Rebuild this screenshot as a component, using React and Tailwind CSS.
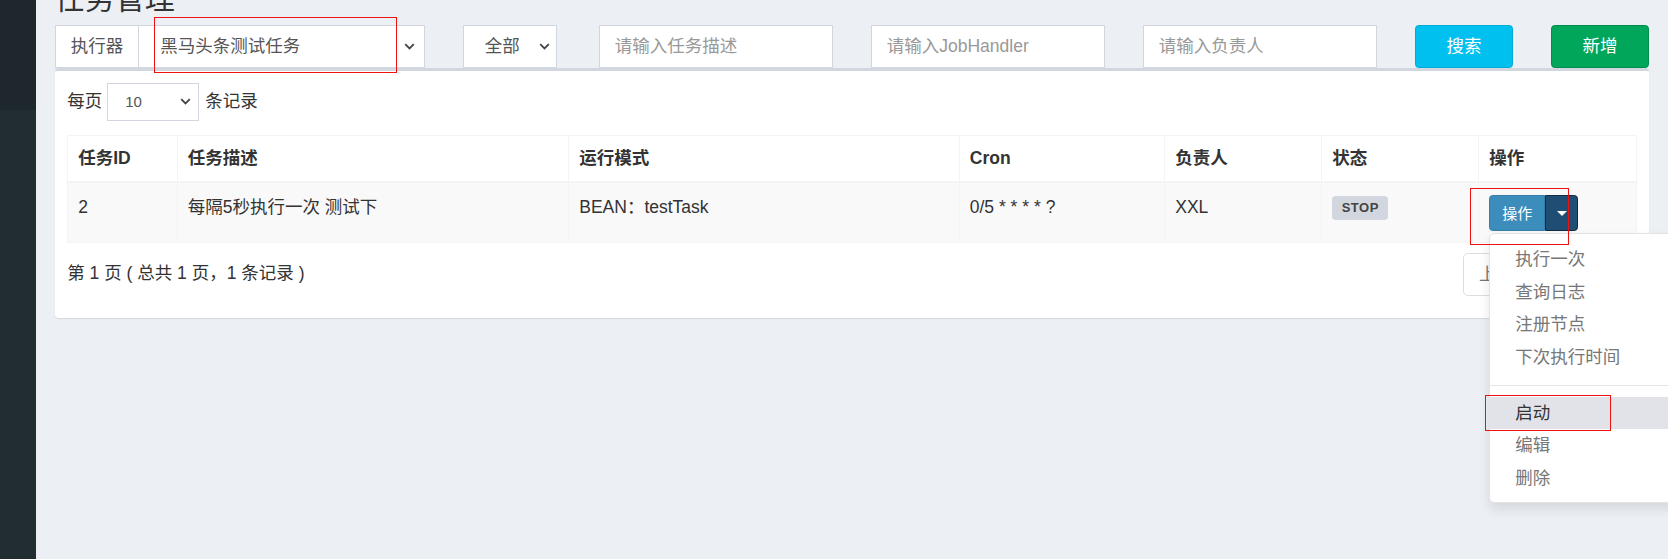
// 任务管理 页面 (xxl-job 风格), 浏览器缩放 125%
function Chevron() {
    return (
        <svg width="11" height="7" viewBox="0 0 11 7" fill="none" className="shrink-0">
            <path d="M1.2 1.2l4.3 4.3 4.3-4.3" stroke="#444" strokeWidth="1.8" />
        </svg>
    );
}

const cols = "grid grid-cols-[109.5px_391.5px_390.5px_205.5px_157px_157px_1fr]";

const headers = ["任务ID", "任务描述", "运行模式", "Cron", "负责人", "状态", "操作"];

const menuTop = ["执行一次", "查询日志", "注册节点", "下次执行时间"];

export default function App() {
    return (
        <div className="relative flex w-[1668px] h-[559px] overflow-hidden bg-[#ecf0f5] font-['Liberation_Sans','Noto_Sans_CJK_SC',sans-serif] text-[17.5px] leading-[25px] text-[#333]">
            {/* 侧边栏 */}
            <aside className="w-[36px] shrink-0 flex flex-col bg-[#222d32]">
                <div className="h-[110px] bg-[#1e282c]" />
            </aside>

            <main className="flex-1 min-w-0 flex flex-col">
                <div className="h-[25px] overflow-hidden px-[18.75px]">
                    <h1 className="-mt-[16.5px] text-[30px] leading-[30px] text-[#333]">任务管理</h1>
                </div>

                {/* 搜索栏 */}
                <div className="grid grid-cols-12 gap-x-[37.5px] px-[18.75px] h-[42.5px]">
                    <div className="col-span-3 flex">
                        <span className="flex items-center px-[15px] border border-[#d2d6de] bg-white text-[#555]">执行器</span>
                        <div className="flex-1 flex items-center justify-between border border-l-0 border-[#d2d6de] bg-white pl-[21px] pr-[9px] text-[#555]">
                            黑马头条测试任务
                            <Chevron />
                        </div>
                    </div>
                    <div className="col-span-1">
                        <div className="w-[94px] h-full flex items-center justify-between border border-[#d2d6de] bg-white pl-[21px] pr-[6px] text-[#555]">
                            全部
                            <Chevron />
                        </div>
                    </div>
                    <div className="col-span-2">
                        <input readOnly placeholder="请输入任务描述" className="w-full h-full border border-[#d2d6de] bg-white px-[15px] outline-none placeholder:text-[#999]" />
                    </div>
                    <div className="col-span-2">
                        <input readOnly placeholder="请输入JobHandler" className="w-full h-full border border-[#d2d6de] bg-white px-[15px] outline-none placeholder:text-[#999]" />
                    </div>
                    <div className="col-span-2">
                        <input readOnly placeholder="请输入负责人" className="w-full h-full border border-[#d2d6de] bg-white px-[15px] outline-none placeholder:text-[#999]" />
                    </div>
                    <div className="col-span-1">
                        <button className="w-full h-full rounded-[3.75px] border border-[#00acd6] bg-[#00c0ef] text-white">搜索</button>
                    </div>
                    <div className="col-span-1">
                        <button className="w-full h-full rounded-[3.75px] border border-[#008d4c] bg-[#00a65a] text-white">新增</button>
                    </div>
                </div>

                {/* 列表 */}
                <div className="px-[18.75px]">
                    <div className="bg-white border-t-[3.75px] border-[#d2d6de] rounded-[3.75px] shadow-[0_1px_1px_rgba(0,0,0,0.1)] px-[12.5px] pt-[12.5px] pb-[19.5px]">
                        <div className="flex items-center h-[37.5px]">
                            <span>每页</span>
                            <div className="ml-[5px] mr-[6px] w-[92px] h-full flex items-center justify-between border border-[#d2d6de] pl-[17px] pr-[7px] text-[15px] text-[#555]">
                                10
                                <Chevron />
                            </div>
                            <span>条记录</span>
                        </div>

                        <div className="mt-[14.75px] border border-[#f4f4f4]">
                            <div className={cols + " h-[47px] border-b-[2.5px] border-[#f4f4f4] font-bold"}>
                                {headers.map((h, i) => (
                                    <div key={h} className={i < 6 ? "px-[10px] pt-[10px] border-r border-[#f4f4f4]" : "px-[10px] pt-[10px]"}>{h}</div>
                                ))}
                            </div>
                            <div className={cols + " h-[59px] bg-[#f9f9f9]"}>
                                <div className="px-[10px] pt-[12px] border-r border-[#f4f4f4]">2</div>
                                <div className="px-[10px] pt-[12px] border-r border-[#f4f4f4]">每隔5秒执行一次 测试下</div>
                                <div className="px-[10px] pt-[12px] border-r border-[#f4f4f4]">BEAN：testTask</div>
                                <div className="px-[10px] pt-[12px] border-r border-[#f4f4f4]">0/5 * * * * ?</div>
                                <div className="px-[10px] pt-[12px] border-r border-[#f4f4f4]">XXL</div>
                                <div className="px-[10px] pt-[12.5px] border-r border-[#f4f4f4]">
                                    <span className="flex items-center justify-center w-[56px] h-[24px] rounded-[4px] bg-[#d2d6de] text-[13px] font-bold tracking-[0.5px] text-[#444]">STOP</span>
                                </div>
                                <div className="px-[10px] pt-[11.5px]">
                                    <div className="relative flex h-[36.5px] w-[89px]">
                                        <button className="w-[56px] h-full rounded-l-[3.75px] border border-[#367fa9] bg-[#3c8dbc] text-[15px] text-white">操作</button>
                                        <button className="w-[33px] h-full flex items-center justify-center rounded-r-[3.75px] border border-[#122b40] bg-[#204d74]">
                                            <span className="w-0 h-0 border-x-[5px] border-x-transparent border-t-[5px] border-t-white" />
                                        </button>

                                        {/* 下拉菜单 */}
                                        <div className="absolute z-10 left-0 top-[calc(100%+2px)] w-[200px] rounded-[5px] border border-[#e3e3e3] bg-white pt-[9px] pb-[8px] shadow-[0_6px_12px_rgba(0,0,0,0.1)]">
                                            {menuTop.map((m) => (
                                                <div key={m} className="px-[25px] py-[3.75px] text-[#777] whitespace-nowrap">{m}</div>
                                            ))}
                                            <div className="my-[11.25px] h-px bg-[#e5e5e5]" />
                                            <div className="px-[25px] py-[3.75px] bg-[#e1e3e9] text-[#333]">启动</div>
                                            <div className="px-[25px] py-[3.75px] text-[#777]">编辑</div>
                                            <div className="px-[25px] py-[3.75px] text-[#777]">删除</div>
                                        </div>
                                    </div>
                                </div>
                            </div>
                        </div>

                        <div className="mt-[7.5px] flex justify-between">
                            <div className="pt-[10px]">第 1 页 ( 总共 1 页，1 条记录 )</div>
                            <div className="mt-[2.5px] mb-[2.5px] flex h-[42.5px] text-[#777]">
                                <span className="flex items-center px-[15px] border border-[#ddd] rounded-l-[5px]">上页</span>
                                <span className="flex items-center px-[15px] border border-l-0 border-[#ddd]">1</span>
                                <span className="flex items-center px-[15px] border border-l-0 border-[#ddd] rounded-r-[5px]">下页</span>
                            </div>
                        </div>
                    </div>
                </div>
            </main>

            {/* 标注框 */}
            <div className="absolute z-20 left-[154px] top-[17px] w-[243px] h-[56px] border border-[#ee1111] pointer-events-none" />
            <div className="absolute z-20 left-[1470px] top-[188px] w-[99px] h-[57px] border border-[#ee1111] pointer-events-none" />
            <div className="absolute z-20 left-[1485px] top-[395px] w-[126px] h-[36px] border border-[#ee1111] pointer-events-none" />
        </div>
    );
}
